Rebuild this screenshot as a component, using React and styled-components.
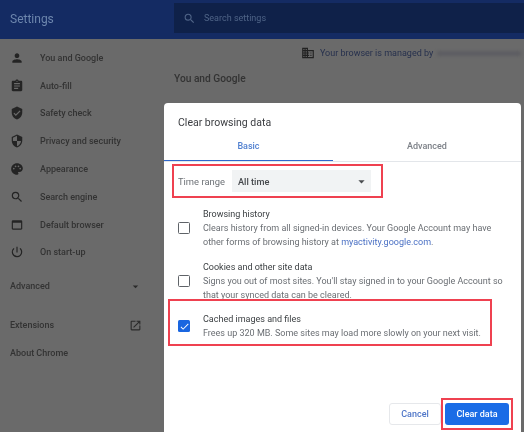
import React from 'react';
import styled, { createGlobalStyle } from 'styled-components';
import {
  MdPerson, MdAssignment, MdVerifiedUser, MdSecurity, MdPalette, MdSearch,
  MdWebAsset, MdPowerSettingsNew, MdOpenInNew, MdDomain, MdArrowDropDown, MdCheck,
} from 'react-icons/md';

const Global = createGlobalStyle`
  html, body { margin: 0; padding: 0; background: #6a6a6a; }
  body { font-family: Roboto, "Liberation Sans", sans-serif; overflow: hidden; }
`;

const Page = styled.div`
  position: relative;
  width: 524px;
  height: 432px;
  overflow: hidden;
  background: #6a6a6a;
  filter: blur(0.5px);
`;

const Header = styled.header`
  height: 39px;
  box-sizing: border-box;
  padding: 3px 0 6px;
  display: flex;
  background: #142b63;
`;

const Brand = styled.div`
  width: 174px;
  box-sizing: border-box;
  padding-left: 10px;
  font-size: 12px;
  line-height: 33px;
  color: #6d86ad;
`;

const SearchBar = styled.div`
  flex: 1;
  display: flex;
  align-items: center;
  gap: 8px;
  padding-left: 9px;
  background: #0f2149;
  color: #4f6487;
  font-size: 9px;
  svg { font-size: 13px; }
`;

const Body = styled.div`
  display: flex;
`;

const Sidebar = styled.nav`
  width: 164px;
  padding-top: 5px;
  flex-shrink: 0;
`;

const Item = styled.div`
  height: 27.8px;
  display: flex;
  align-items: center;
  gap: 16px;
  padding-left: 10px;
  font-size: 9px;
  font-weight: 500;
  color: #333;
  svg { font-size: 14px; color: #242424; flex-shrink: 0; }
`;

const SideHead = styled.div`
  height: 28px;
  display: flex;
  align-items: center;
  justify-content: space-between;
  padding: 0 22px 0 10px;
  margin-top: ${(p) => p.$top || 0}px;
  font-size: 9px;
  font-weight: 500;
  color: #333;
  svg { font-size: 13px; color: #2a2a2a; }
`;

const Main = styled.main`
  flex: 1;
  padding: 7px 0 0 10px;
`;

const Managed = styled.div`
  display: flex;
  align-items: center;
  height: 14px;
  margin-left: 127px;
  font-size: 9px;
  color: #26304d;
  white-space: nowrap;
  svg { font-size: 14px; color: #222; margin-right: 5px; }
`;

const Redacted = styled.span`
  display: inline-block;
  width: 84px;
  height: 5px;
  margin-left: 4px;
  border-radius: 2px;
  background: #5d5d62;
  filter: blur(1.5px);
`;

const SectionTitle = styled.h2`
  margin: 12px 0 0;
  font-size: 10.2px;
  line-height: 14px;
  font-weight: 500;
  color: #333;
`;

const Dialog = styled.section`
  position: absolute;
  left: 164px;
  top: 103px;
  width: 357px;
  height: 340px;
  border-radius: 4px 4px 0 0;
  background: #fff;
  display: flex;
  flex-direction: column;
`;

const DialogTitle = styled.h1`
  margin: 0;
  padding: 13px 0 0 14px;
  height: 18px;
  font-size: 10.5px;
  line-height: 14px;
  font-weight: 400;
  color: #3a3c40;
`;

const Tabs = styled.div`
  display: flex;
  height: 24px;
  margin-top: 3px;
  border-bottom: 1px solid #e3e6ea;
`;

const Tab = styled.div`
  width: ${(p) => p.$width}px;
  height: 24px;
  box-sizing: border-box;
  text-align: center;
  padding-top: 4px;
  font-size: 9px;
  font-weight: 500;
  color: ${(p) => (p.$active ? '#4f7fd0' : '#7c8087')};
  border-bottom: ${(p) => (p.$active ? '1.5px solid #2f68cc' : 'none')};
`;

const Highlight = styled.div`
  border: 2px solid #ef4150;
  box-sizing: border-box;
`;

const RangeBox = styled(Highlight)`
  width: 211px;
  height: 34px;
  margin: 2px 0 0 8px;
  display: flex;
  align-items: center;
  padding-left: 4px;
`;

const RangeLabel = styled.span`
  width: 54px;
  font-size: 9.4px;
  color: #6d7176;
`;

const Select = styled.div`
  width: 139px;
  height: 22px;
  display: flex;
  align-items: center;
  justify-content: space-between;
  padding: 0 2px 0 6px;
  box-sizing: border-box;
  background: #f1f3f4;
  font-size: 9.2px;
  font-weight: 500;
  color: #45484c;
  svg { font-size: 15px; color: #4a4d50; }
`;

const Option = styled.div`
  display: flex;
  align-items: center;
  margin: ${(p) => p.$top}px 0 0 14px;
`;

const CheckedBox = styled(Highlight)`
  width: 324px;
  height: 47px;
  margin: -3px 0 0 4px;
  display: flex;
  align-items: center;
  padding: 7px 0 0 8px;
`;

const Box = styled.span`
  width: 12px;
  height: 12px;
  box-sizing: border-box;
  flex-shrink: 0;
  margin-right: 13px;
  border-radius: 1.5px;
  display: flex;
  align-items: center;
  justify-content: center;
  background: ${(p) => (p.$on ? '#1a66e0' : '#fff')};
  border: ${(p) => (p.$on ? 'none' : '1.5px solid #5f6368')};
  svg { font-size: 11px; color: #fff; }
`;

const OptionTitle = styled.div`
  font-size: 9px;
  line-height: 14px;
  font-weight: 400;
  color: #3c4043;
`;

const OptionText = styled.div`
  font-size: 9px;
  line-height: 14px;
  color: #6a6e73;
  white-space: nowrap;
  a { color: #4a70c4; text-decoration: none; }
`;

const Footer = styled.div`
  margin-top: auto;
  margin-bottom: 13px;
  display: flex;
  justify-content: flex-end;
  align-items: center;
  padding-right: 8px;
`;

const CancelButton = styled.button`
  width: 52px;
  height: 22px;
  padding: 0;
  font: 500 9px Roboto, sans-serif;
  color: #4f76c8;
  background: #fff;
  border: 1px solid #e6e8eb;
  border-radius: 3px;
`;

const ClearBox = styled(Highlight)`
  width: 72px;
  height: 32px;
  display: flex;
  align-items: center;
  justify-content: center;
`;

const ClearButton = styled.button`
  width: 64px;
  height: 22px;
  padding: 0;
  font: 500 9px Roboto, sans-serif;
  color: #fff;
  background: #1a6ce6;
  border: none;
  border-radius: 3px;
`;

const menu = [
  ['You and Google', MdPerson],
  ['Auto-fill', MdAssignment],
  ['Safety check', MdVerifiedUser],
  ['Privacy and security', MdSecurity],
  ['Appearance', MdPalette],
  ['Search engine', MdSearch],
  ['Default browser', MdWebAsset],
  ['On start-up', MdPowerSettingsNew],
];

export default function App() {
  return (
    <Page>
      <Global />
      <Header>
        <Brand>Settings</Brand>
        <SearchBar>
          <MdSearch />
          Search settings
        </SearchBar>
      </Header>
      <Body>
        <Sidebar>
          {menu.map(([label, Icon]) => (
            <Item key={label}>
              <Icon />
              {label}
            </Item>
          ))}
          <SideHead $top={6}>
            Advanced
            <MdArrowDropDown />
          </SideHead>
          <SideHead $top={11}>
            Extensions
            <MdOpenInNew />
          </SideHead>
          <SideHead>About Chrome</SideHead>
        </Sidebar>
        <Main>
          <Managed>
            <MdDomain />
            Your browser is managed by
            <Redacted />
          </Managed>
          <SectionTitle>You and Google</SectionTitle>
        </Main>
      </Body>

      <Dialog>
        <DialogTitle>Clear browsing data</DialogTitle>
        <Tabs>
          <Tab $width={169} $active>Basic</Tab>
          <Tab $width={188}>Advanced</Tab>
        </Tabs>
        <RangeBox>
          <RangeLabel>Time range</RangeLabel>
          <Select>
            All time
            <MdArrowDropDown />
          </Select>
        </RangeBox>
        <Option $top={9}>
          <Box />
          <div>
            <OptionTitle>Browsing history</OptionTitle>
            <OptionText>Clears history from all signed-in devices. Your Google Account may have</OptionText>
            <OptionText>other forms of browsing history at <a href="#a">myactivity.google.com</a>.</OptionText>
          </div>
        </Option>
        <Option $top={11}>
          <Box />
          <div>
            <OptionTitle>Cookies and other site data</OptionTitle>
            <OptionText>Signs you out of most sites. You'll stay signed in to your Google Account so</OptionText>
            <OptionText>that your synced data can be cleared.</OptionText>
          </div>
        </Option>
        <CheckedBox>
          <Box $on><MdCheck /></Box>
          <div>
            <OptionTitle>Cached images and files</OptionTitle>
            <OptionText>Frees up 320 MB. Some sites may load more slowly on your next visit.</OptionText>
          </div>
        </CheckedBox>
        <Footer>
          <CancelButton>Cancel</CancelButton>
          <ClearBox>
            <ClearButton>Clear data</ClearButton>
          </ClearBox>
        </Footer>
      </Dialog>
    </Page>
  );
}
